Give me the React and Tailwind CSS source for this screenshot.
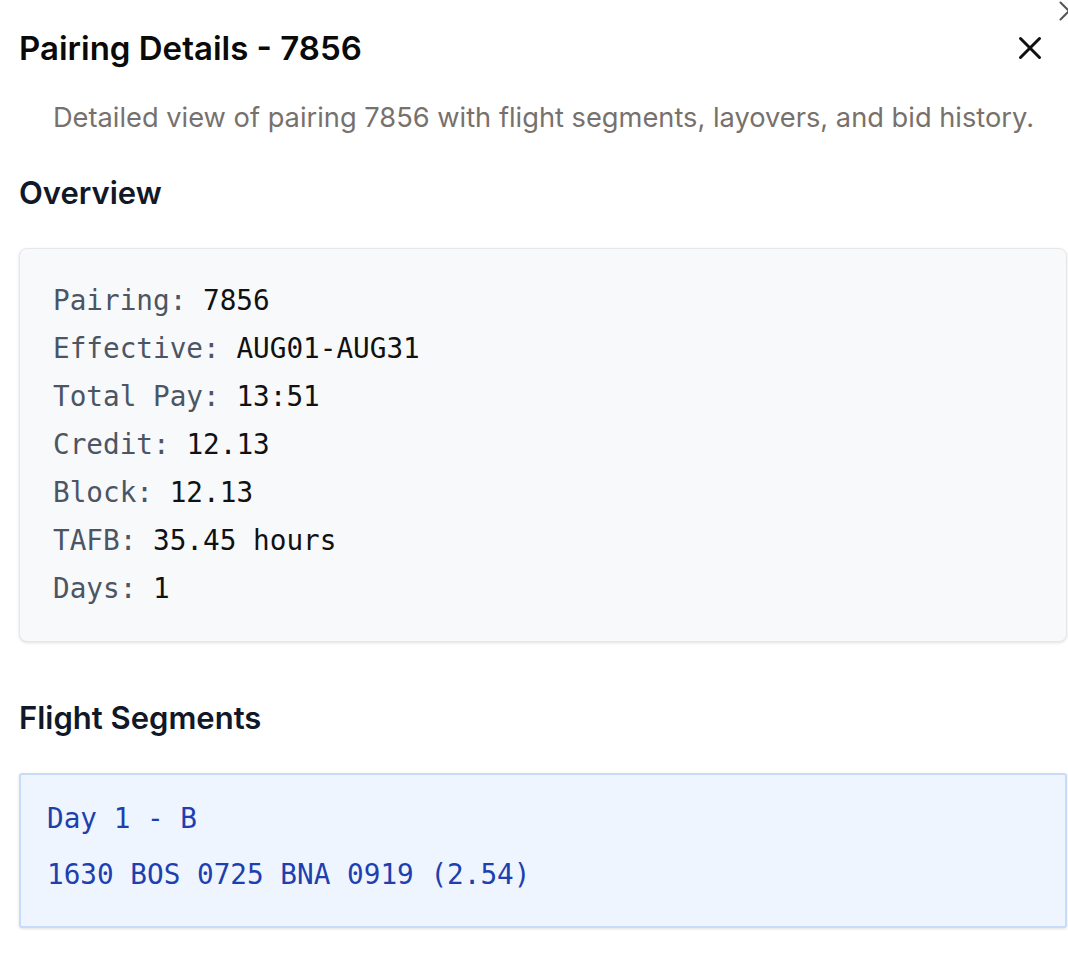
import React from 'react';
import { X } from 'lucide-react';

const overview = [
  ['Pairing', '7856'],
  ['Effective', 'AUG01-AUG31'],
  ['Total Pay', '13:51'],
  ['Credit', '12.13'],
  ['Block', '12.13'],
  ['TAFB', '35.45 hours'],
  ['Days', '1'],
];

const segments = ['Day 1 - B', '1630 BOS 0725 BNA 0919 (2.54)'];

const mono = { fontFamily: '"DejaVu Sans Mono", monospace' };

export default function App() {
  return (
    <div className="relative w-[1068px] h-[970px] overflow-hidden bg-white font-['Inter',sans-serif]">
      <X className="absolute -right-[18px] -top-[6px] text-[#555]" size={34} strokeWidth={1.4} />

      <div className="pl-[19px] pr-[1px]">
        <div className="flex items-center justify-between pt-[28px] pr-[18px]">
          <h2 className="text-[33px] leading-[40px] font-semibold text-[#0a0a0a]">
            Pairing Details - 7856
          </h2>
          <X size={38} strokeWidth={1.9} className="text-[#111]" />
        </div>

        <p className="mt-[33px] text-right pr-[33px] text-[27.25px] leading-[34px] text-[#77716d]">
          Detailed view of pairing 7856 with flight segments, layovers, and bid history.
        </p>

        <h3 className="mt-[39px] text-[31px] leading-[38px] font-semibold text-[#111827]">Overview</h3>

        <div
          className="mt-[36px] rounded-[8px] border border-[#e5e7eb] bg-[#f8f9fb] shadow-[0_1px_3px_rgba(0,0,0,0.12)] pl-[33px] pt-[28px] pb-[28px]"
          style={mono}
        >
          {overview.map(([k, v]) => (
            <div key={k} className="text-[27.7px] leading-[48px]">
              <span className="text-[#4b5563]">{k}:</span> <span className="text-[#111]">{v}</span>
            </div>
          ))}
        </div>

        <h3 className="mt-[57px] text-[31px] leading-[38px] font-semibold text-[#111827]">Flight Segments</h3>

        <div
          className="mt-[36px] rounded-[3px] border-2 border-[#c7dbfa] bg-[#eef5fe] shadow-[0_1px_3px_rgba(0,0,0,0.12)] pl-[26px] pt-[20px] pb-[27px] flex flex-col gap-[8px]"
          style={mono}
        >
          {segments.map(s => (
            <div key={s} className="text-[27.7px] leading-[48px] text-[#1e40af]">{s}</div>
          ))}
        </div>
      </div>
    </div>
  );
}
